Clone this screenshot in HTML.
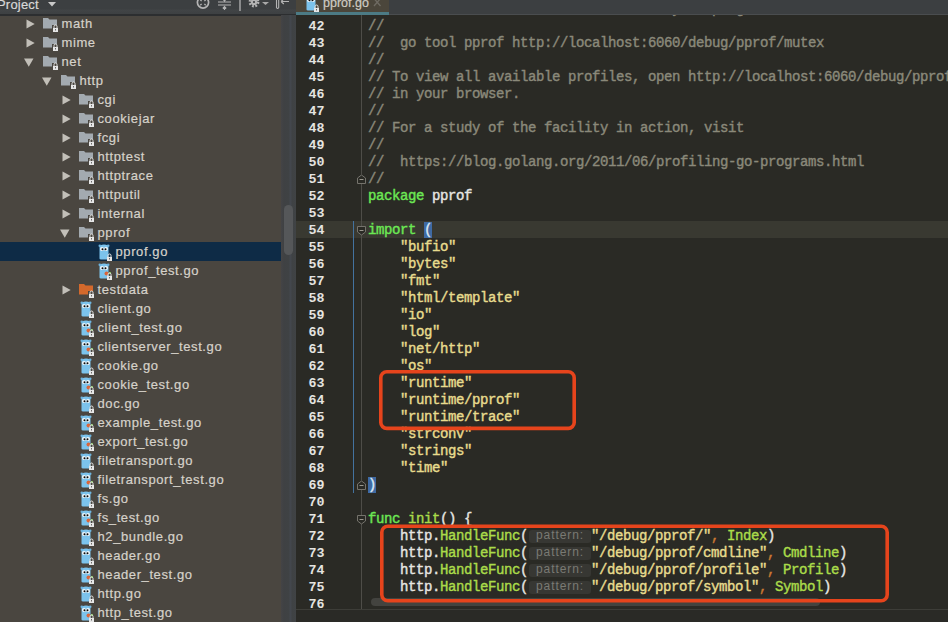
<!DOCTYPE html>
<html><head><meta charset="utf-8">
<style>
*{margin:0;padding:0;box-sizing:border-box}
html,body{width:948px;height:622px;overflow:hidden;background:#2a2a25}
body{position:relative;font-family:"Liberation Sans",sans-serif}
.abs{position:absolute}
#sb{position:absolute;left:0;top:0;width:281px;height:622px;background:#4a4640;overflow:hidden}
#hdr{position:absolute;left:0;top:0;width:296px;height:14px;background:linear-gradient(#3c3f41 0,#3c3f41 9px,#414446 10px,#3e4143 13px)}
#hdrb{position:absolute;left:0;top:14px;width:296px;height:1.5px;background:#2c2e30}
.row{position:absolute;left:0;width:281px;height:19px}
.row.sel{background:#0e2b46}
.t{position:absolute;top:0;height:19px;line-height:19px;font-size:13px;letter-spacing:0.6px;color:#d6d2ca;white-space:pre;-webkit-text-stroke:0.2px}
.ic{position:absolute}
#vtrack{position:absolute;left:281px;top:15px;width:15px;height:607px;background:linear-gradient(90deg,#444446 0,#3f4143 3px,#3f4244 8px,#43474d 9px,#43474d 10px,#3f4244 11px,#404345 15px)}
#vthumb{position:absolute;left:283.5px;top:205px;width:9px;height:50px;border-radius:4.5px;background:#555759}
#ed{position:absolute;left:296px;top:0;width:652px;height:622px;background:#2a2a25;overflow:hidden}
.ln{position:absolute;left:0;width:652px;height:17px}
.cur{background:#393931}
.num{position:absolute;left:0;top:1px;width:28.5px;text-align:right;font-family:"Liberation Mono",monospace;font-size:13.3px;letter-spacing:0;line-height:17px;color:#e4e4e0;font-weight:bold}
.code{position:absolute;left:72px;top:0.5px;white-space:pre;font-family:"Liberation Mono",monospace;font-size:14px;letter-spacing:-0.4px;line-height:17px;color:#e6e6e2;-webkit-text-stroke:0.4px}
.c{color:#8a897a}.k{color:#6ce854}.s{color:#e8dc8e}.f{color:#aadc4a}.o{color:#cc7832}
.hint{display:inline-block;vertical-align:top;margin-top:2px;margin-left:1px;height:13px;width:62px;border-radius:3px;background:#373733;color:#7a7a73;font-family:"Liberation Sans",sans-serif;font-size:12px;line-height:11px;letter-spacing:0.9px;text-indent:7px;position:relative;top:0;-webkit-text-stroke:0}
.brace{background:#3f6aa3;color:#dde8f2}
#tabbar{position:absolute;left:296px;top:0;width:652px;height:15px;background:#3c3f41}
#tab{position:absolute;left:296px;top:0;width:93px;height:12px;background:#4b463b}
#tabline{position:absolute;left:296px;top:12px;width:93px;height:3px;background:#4c7b85}
#tabbot{position:absolute;left:389px;top:14px;width:559px;height:1px;background:#4a4d4f}
.box{position:absolute;border:3.5px solid #e6441c;border-radius:8px}
</style></head><body>
<div id="sb"><div class="row" style="top:14px"><svg class="ic" style="left:25.5px;top:5px" width="9" height="10"><path d="M0.5 0.5 L8.7 5 L0.5 9.5Z" fill="#c2bfb8"/></svg><svg class="ic" style="left:43.0px;top:3px" width="17" height="16"><path d="M0 1 H5 L6.5 2.5 H14 V11.5 H0Z" fill="#a3aab0"/><rect x="9" y="8" width="7" height="8" fill="#4a4640"/><rect x="10" y="11" width="5" height="4" fill="#e6e6e6"/><path d="M11 11 v-1.5 a1.5 1.5 0 0 1 3 0 v1.5" fill="none" stroke="#e6e6e6" stroke-width="1"/><rect x="12" y="12" width="1" height="1.5" fill="#6a6a6a"/></svg><div class="t" style="left:61.5px">math</div></div><div class="row" style="top:33px"><svg class="ic" style="left:25.5px;top:5px" width="9" height="10"><path d="M0.5 0.5 L8.7 5 L0.5 9.5Z" fill="#c2bfb8"/></svg><svg class="ic" style="left:43.0px;top:3px" width="17" height="16"><path d="M0 1 H5 L6.5 2.5 H14 V11.5 H0Z" fill="#a3aab0"/><rect x="9" y="8" width="7" height="8" fill="#4a4640"/><rect x="10" y="11" width="5" height="4" fill="#e6e6e6"/><path d="M11 11 v-1.5 a1.5 1.5 0 0 1 3 0 v1.5" fill="none" stroke="#e6e6e6" stroke-width="1"/><rect x="12" y="12" width="1" height="1.5" fill="#6a6a6a"/></svg><div class="t" style="left:61.5px">mime</div></div><div class="row" style="top:52px"><svg class="ic" style="left:24.0px;top:6px" width="10" height="9"><path d="M0 0.5 L9.5 0.5 L4.75 8.7Z" fill="#c2bfb8"/></svg><svg class="ic" style="left:43.0px;top:3px" width="17" height="16"><path d="M0 1 H5 L6.5 2.5 H14 V11.5 H0Z" fill="#a3aab0"/><rect x="9" y="8" width="7" height="8" fill="#4a4640"/><rect x="10" y="11" width="5" height="4" fill="#e6e6e6"/><path d="M11 11 v-1.5 a1.5 1.5 0 0 1 3 0 v1.5" fill="none" stroke="#e6e6e6" stroke-width="1"/><rect x="12" y="12" width="1" height="1.5" fill="#6a6a6a"/></svg><div class="t" style="left:61.5px">net</div></div><div class="row" style="top:71px"><svg class="ic" style="left:42.0px;top:6px" width="10" height="9"><path d="M0 0.5 L9.5 0.5 L4.75 8.7Z" fill="#c2bfb8"/></svg><svg class="ic" style="left:61.0px;top:3px" width="17" height="16"><path d="M0 1 H5 L6.5 2.5 H14 V11.5 H0Z" fill="#a3aab0"/><rect x="9" y="8" width="7" height="8" fill="#4a4640"/><rect x="10" y="11" width="5" height="4" fill="#e6e6e6"/><path d="M11 11 v-1.5 a1.5 1.5 0 0 1 3 0 v1.5" fill="none" stroke="#e6e6e6" stroke-width="1"/><rect x="12" y="12" width="1" height="1.5" fill="#6a6a6a"/></svg><div class="t" style="left:79.5px">http</div></div><div class="row" style="top:90px"><svg class="ic" style="left:61.5px;top:5px" width="9" height="10"><path d="M0.5 0.5 L8.7 5 L0.5 9.5Z" fill="#c2bfb8"/></svg><svg class="ic" style="left:79.0px;top:3px" width="17" height="16"><path d="M0 1 H5 L6.5 2.5 H14 V11.5 H0Z" fill="#a3aab0"/><rect x="9" y="8" width="7" height="8" fill="#4a4640"/><rect x="10" y="11" width="5" height="4" fill="#e6e6e6"/><path d="M11 11 v-1.5 a1.5 1.5 0 0 1 3 0 v1.5" fill="none" stroke="#e6e6e6" stroke-width="1"/><rect x="12" y="12" width="1" height="1.5" fill="#6a6a6a"/></svg><div class="t" style="left:97.5px">cgi</div></div><div class="row" style="top:109px"><svg class="ic" style="left:61.5px;top:5px" width="9" height="10"><path d="M0.5 0.5 L8.7 5 L0.5 9.5Z" fill="#c2bfb8"/></svg><svg class="ic" style="left:79.0px;top:3px" width="17" height="16"><path d="M0 1 H5 L6.5 2.5 H14 V11.5 H0Z" fill="#a3aab0"/><rect x="9" y="8" width="7" height="8" fill="#4a4640"/><rect x="10" y="11" width="5" height="4" fill="#e6e6e6"/><path d="M11 11 v-1.5 a1.5 1.5 0 0 1 3 0 v1.5" fill="none" stroke="#e6e6e6" stroke-width="1"/><rect x="12" y="12" width="1" height="1.5" fill="#6a6a6a"/></svg><div class="t" style="left:97.5px">cookiejar</div></div><div class="row" style="top:128px"><svg class="ic" style="left:61.5px;top:5px" width="9" height="10"><path d="M0.5 0.5 L8.7 5 L0.5 9.5Z" fill="#c2bfb8"/></svg><svg class="ic" style="left:79.0px;top:3px" width="17" height="16"><path d="M0 1 H5 L6.5 2.5 H14 V11.5 H0Z" fill="#a3aab0"/><rect x="9" y="8" width="7" height="8" fill="#4a4640"/><rect x="10" y="11" width="5" height="4" fill="#e6e6e6"/><path d="M11 11 v-1.5 a1.5 1.5 0 0 1 3 0 v1.5" fill="none" stroke="#e6e6e6" stroke-width="1"/><rect x="12" y="12" width="1" height="1.5" fill="#6a6a6a"/></svg><div class="t" style="left:97.5px">fcgi</div></div><div class="row" style="top:147px"><svg class="ic" style="left:61.5px;top:5px" width="9" height="10"><path d="M0.5 0.5 L8.7 5 L0.5 9.5Z" fill="#c2bfb8"/></svg><svg class="ic" style="left:79.0px;top:3px" width="17" height="16"><path d="M0 1 H5 L6.5 2.5 H14 V11.5 H0Z" fill="#a3aab0"/><rect x="9" y="8" width="7" height="8" fill="#4a4640"/><rect x="10" y="11" width="5" height="4" fill="#e6e6e6"/><path d="M11 11 v-1.5 a1.5 1.5 0 0 1 3 0 v1.5" fill="none" stroke="#e6e6e6" stroke-width="1"/><rect x="12" y="12" width="1" height="1.5" fill="#6a6a6a"/></svg><div class="t" style="left:97.5px">httptest</div></div><div class="row" style="top:166px"><svg class="ic" style="left:61.5px;top:5px" width="9" height="10"><path d="M0.5 0.5 L8.7 5 L0.5 9.5Z" fill="#c2bfb8"/></svg><svg class="ic" style="left:79.0px;top:3px" width="17" height="16"><path d="M0 1 H5 L6.5 2.5 H14 V11.5 H0Z" fill="#a3aab0"/><rect x="9" y="8" width="7" height="8" fill="#4a4640"/><rect x="10" y="11" width="5" height="4" fill="#e6e6e6"/><path d="M11 11 v-1.5 a1.5 1.5 0 0 1 3 0 v1.5" fill="none" stroke="#e6e6e6" stroke-width="1"/><rect x="12" y="12" width="1" height="1.5" fill="#6a6a6a"/></svg><div class="t" style="left:97.5px">httptrace</div></div><div class="row" style="top:185px"><svg class="ic" style="left:61.5px;top:5px" width="9" height="10"><path d="M0.5 0.5 L8.7 5 L0.5 9.5Z" fill="#c2bfb8"/></svg><svg class="ic" style="left:79.0px;top:3px" width="17" height="16"><path d="M0 1 H5 L6.5 2.5 H14 V11.5 H0Z" fill="#a3aab0"/><rect x="9" y="8" width="7" height="8" fill="#4a4640"/><rect x="10" y="11" width="5" height="4" fill="#e6e6e6"/><path d="M11 11 v-1.5 a1.5 1.5 0 0 1 3 0 v1.5" fill="none" stroke="#e6e6e6" stroke-width="1"/><rect x="12" y="12" width="1" height="1.5" fill="#6a6a6a"/></svg><div class="t" style="left:97.5px">httputil</div></div><div class="row" style="top:204px"><svg class="ic" style="left:61.5px;top:5px" width="9" height="10"><path d="M0.5 0.5 L8.7 5 L0.5 9.5Z" fill="#c2bfb8"/></svg><svg class="ic" style="left:79.0px;top:3px" width="17" height="16"><path d="M0 1 H5 L6.5 2.5 H14 V11.5 H0Z" fill="#a3aab0"/><rect x="9" y="8" width="7" height="8" fill="#4a4640"/><rect x="10" y="11" width="5" height="4" fill="#e6e6e6"/><path d="M11 11 v-1.5 a1.5 1.5 0 0 1 3 0 v1.5" fill="none" stroke="#e6e6e6" stroke-width="1"/><rect x="12" y="12" width="1" height="1.5" fill="#6a6a6a"/></svg><div class="t" style="left:97.5px">internal</div></div><div class="row" style="top:223px"><svg class="ic" style="left:60.0px;top:6px" width="10" height="9"><path d="M0 0.5 L9.5 0.5 L4.75 8.7Z" fill="#c2bfb8"/></svg><svg class="ic" style="left:79.0px;top:3px" width="17" height="16"><path d="M0 1 H5 L6.5 2.5 H14 V11.5 H0Z" fill="#a3aab0"/><rect x="9" y="8" width="7" height="8" fill="#4a4640"/><rect x="10" y="11" width="5" height="4" fill="#e6e6e6"/><path d="M11 11 v-1.5 a1.5 1.5 0 0 1 3 0 v1.5" fill="none" stroke="#e6e6e6" stroke-width="1"/><rect x="12" y="12" width="1" height="1.5" fill="#6a6a6a"/></svg><div class="t" style="left:97.5px">pprof</div></div><div class="row sel" style="top:242px"><svg class="ic" style="left:98.0px;top:2px" width="15" height="17"><path d="M1.5 3 Q1.5 0.5 6 0.5 Q10.5 0.5 10.5 3 V14.5 Q10.5 15.5 9 15.5 H3 Q1.5 15.5 1.5 14.5Z" fill="#7cc3ec"/><circle cx="1.8" cy="1.8" r="1.3" fill="#6fb5e0"/><circle cx="10.2" cy="1.8" r="1.3" fill="#6fb5e0"/><circle cx="4" cy="5" r="2" fill="#f4f8fb"/><circle cx="8" cy="5" r="2" fill="#f4f8fb"/><circle cx="4.5" cy="5.2" r="1" fill="#0c0c0c"/><circle cx="7.5" cy="5.2" r="1" fill="#0c0c0c"/><rect x="8" y="9" width="7" height="8" fill="#4a4640" opacity="0"/><rect x="9" y="13" width="5" height="4" fill="#e6e6e6"/><path d="M10 13 v-1.5 a1.5 1.5 0 0 1 3 0 v1.5" fill="none" stroke="#e6e6e6" stroke-width="1"/><rect x="11" y="14" width="1" height="1.5" fill="#6a6a6a"/></svg><div class="t" style="left:115.5px">pprof.go</div></div><div class="row" style="top:261px"><svg class="ic" style="left:98.0px;top:2px" width="15" height="17"><path d="M1.5 3 Q1.5 0.5 6 0.5 Q10.5 0.5 10.5 3 V14.5 Q10.5 15.5 9 15.5 H3 Q1.5 15.5 1.5 14.5Z" fill="#7cc3ec"/><circle cx="1.8" cy="1.8" r="1.3" fill="#6fb5e0"/><circle cx="10.2" cy="1.8" r="1.3" fill="#6fb5e0"/><circle cx="4" cy="5" r="2" fill="#f4f8fb"/><circle cx="8" cy="5" r="2" fill="#f4f8fb"/><circle cx="4.5" cy="5.2" r="1" fill="#0c0c0c"/><circle cx="7.5" cy="5.2" r="1" fill="#0c0c0c"/><circle cx="8.5" cy="10.5" r="2" fill="#d9653a"/><rect x="11" y="9" width="2" height="2" fill="#7dbb5a"/><rect x="8" y="9" width="7" height="8" fill="#4a4640" opacity="0"/><rect x="9" y="13" width="5" height="4" fill="#e6e6e6"/><path d="M10 13 v-1.5 a1.5 1.5 0 0 1 3 0 v1.5" fill="none" stroke="#e6e6e6" stroke-width="1"/><rect x="11" y="14" width="1" height="1.5" fill="#6a6a6a"/></svg><div class="t" style="left:115.5px">pprof_test.go</div></div><div class="row" style="top:280px"><svg class="ic" style="left:61.5px;top:5px" width="9" height="10"><path d="M0.5 0.5 L8.7 5 L0.5 9.5Z" fill="#c2bfb8"/></svg><svg class="ic" style="left:79.0px;top:3px" width="17" height="16"><path d="M0 1 H5 L6.5 2.5 H14 V11.5 H0Z" fill="#d4692c"/><rect x="9" y="8" width="7" height="8" fill="#4a4640"/><rect x="10" y="11" width="5" height="4" fill="#e6e6e6"/><path d="M11 11 v-1.5 a1.5 1.5 0 0 1 3 0 v1.5" fill="none" stroke="#e6e6e6" stroke-width="1"/><rect x="12" y="12" width="1" height="1.5" fill="#6a6a6a"/></svg><div class="t" style="left:97.5px">testdata</div></div><div class="row" style="top:299px"><svg class="ic" style="left:80.0px;top:2px" width="15" height="17"><path d="M1.5 3 Q1.5 0.5 6 0.5 Q10.5 0.5 10.5 3 V14.5 Q10.5 15.5 9 15.5 H3 Q1.5 15.5 1.5 14.5Z" fill="#7cc3ec"/><circle cx="1.8" cy="1.8" r="1.3" fill="#6fb5e0"/><circle cx="10.2" cy="1.8" r="1.3" fill="#6fb5e0"/><circle cx="4" cy="5" r="2" fill="#f4f8fb"/><circle cx="8" cy="5" r="2" fill="#f4f8fb"/><circle cx="4.5" cy="5.2" r="1" fill="#0c0c0c"/><circle cx="7.5" cy="5.2" r="1" fill="#0c0c0c"/><rect x="8" y="9" width="7" height="8" fill="#4a4640" opacity="0"/><rect x="9" y="13" width="5" height="4" fill="#e6e6e6"/><path d="M10 13 v-1.5 a1.5 1.5 0 0 1 3 0 v1.5" fill="none" stroke="#e6e6e6" stroke-width="1"/><rect x="11" y="14" width="1" height="1.5" fill="#6a6a6a"/></svg><div class="t" style="left:97.5px">client.go</div></div><div class="row" style="top:318px"><svg class="ic" style="left:80.0px;top:2px" width="15" height="17"><path d="M1.5 3 Q1.5 0.5 6 0.5 Q10.5 0.5 10.5 3 V14.5 Q10.5 15.5 9 15.5 H3 Q1.5 15.5 1.5 14.5Z" fill="#7cc3ec"/><circle cx="1.8" cy="1.8" r="1.3" fill="#6fb5e0"/><circle cx="10.2" cy="1.8" r="1.3" fill="#6fb5e0"/><circle cx="4" cy="5" r="2" fill="#f4f8fb"/><circle cx="8" cy="5" r="2" fill="#f4f8fb"/><circle cx="4.5" cy="5.2" r="1" fill="#0c0c0c"/><circle cx="7.5" cy="5.2" r="1" fill="#0c0c0c"/><circle cx="8.5" cy="10.5" r="2" fill="#d9653a"/><rect x="11" y="9" width="2" height="2" fill="#7dbb5a"/><rect x="8" y="9" width="7" height="8" fill="#4a4640" opacity="0"/><rect x="9" y="13" width="5" height="4" fill="#e6e6e6"/><path d="M10 13 v-1.5 a1.5 1.5 0 0 1 3 0 v1.5" fill="none" stroke="#e6e6e6" stroke-width="1"/><rect x="11" y="14" width="1" height="1.5" fill="#6a6a6a"/></svg><div class="t" style="left:97.5px">client_test.go</div></div><div class="row" style="top:337px"><svg class="ic" style="left:80.0px;top:2px" width="15" height="17"><path d="M1.5 3 Q1.5 0.5 6 0.5 Q10.5 0.5 10.5 3 V14.5 Q10.5 15.5 9 15.5 H3 Q1.5 15.5 1.5 14.5Z" fill="#7cc3ec"/><circle cx="1.8" cy="1.8" r="1.3" fill="#6fb5e0"/><circle cx="10.2" cy="1.8" r="1.3" fill="#6fb5e0"/><circle cx="4" cy="5" r="2" fill="#f4f8fb"/><circle cx="8" cy="5" r="2" fill="#f4f8fb"/><circle cx="4.5" cy="5.2" r="1" fill="#0c0c0c"/><circle cx="7.5" cy="5.2" r="1" fill="#0c0c0c"/><circle cx="8.5" cy="10.5" r="2" fill="#d9653a"/><rect x="11" y="9" width="2" height="2" fill="#7dbb5a"/><rect x="8" y="9" width="7" height="8" fill="#4a4640" opacity="0"/><rect x="9" y="13" width="5" height="4" fill="#e6e6e6"/><path d="M10 13 v-1.5 a1.5 1.5 0 0 1 3 0 v1.5" fill="none" stroke="#e6e6e6" stroke-width="1"/><rect x="11" y="14" width="1" height="1.5" fill="#6a6a6a"/></svg><div class="t" style="left:97.5px">clientserver_test.go</div></div><div class="row" style="top:356px"><svg class="ic" style="left:80.0px;top:2px" width="15" height="17"><path d="M1.5 3 Q1.5 0.5 6 0.5 Q10.5 0.5 10.5 3 V14.5 Q10.5 15.5 9 15.5 H3 Q1.5 15.5 1.5 14.5Z" fill="#7cc3ec"/><circle cx="1.8" cy="1.8" r="1.3" fill="#6fb5e0"/><circle cx="10.2" cy="1.8" r="1.3" fill="#6fb5e0"/><circle cx="4" cy="5" r="2" fill="#f4f8fb"/><circle cx="8" cy="5" r="2" fill="#f4f8fb"/><circle cx="4.5" cy="5.2" r="1" fill="#0c0c0c"/><circle cx="7.5" cy="5.2" r="1" fill="#0c0c0c"/><rect x="8" y="9" width="7" height="8" fill="#4a4640" opacity="0"/><rect x="9" y="13" width="5" height="4" fill="#e6e6e6"/><path d="M10 13 v-1.5 a1.5 1.5 0 0 1 3 0 v1.5" fill="none" stroke="#e6e6e6" stroke-width="1"/><rect x="11" y="14" width="1" height="1.5" fill="#6a6a6a"/></svg><div class="t" style="left:97.5px">cookie.go</div></div><div class="row" style="top:375px"><svg class="ic" style="left:80.0px;top:2px" width="15" height="17"><path d="M1.5 3 Q1.5 0.5 6 0.5 Q10.5 0.5 10.5 3 V14.5 Q10.5 15.5 9 15.5 H3 Q1.5 15.5 1.5 14.5Z" fill="#7cc3ec"/><circle cx="1.8" cy="1.8" r="1.3" fill="#6fb5e0"/><circle cx="10.2" cy="1.8" r="1.3" fill="#6fb5e0"/><circle cx="4" cy="5" r="2" fill="#f4f8fb"/><circle cx="8" cy="5" r="2" fill="#f4f8fb"/><circle cx="4.5" cy="5.2" r="1" fill="#0c0c0c"/><circle cx="7.5" cy="5.2" r="1" fill="#0c0c0c"/><circle cx="8.5" cy="10.5" r="2" fill="#d9653a"/><rect x="11" y="9" width="2" height="2" fill="#7dbb5a"/><rect x="8" y="9" width="7" height="8" fill="#4a4640" opacity="0"/><rect x="9" y="13" width="5" height="4" fill="#e6e6e6"/><path d="M10 13 v-1.5 a1.5 1.5 0 0 1 3 0 v1.5" fill="none" stroke="#e6e6e6" stroke-width="1"/><rect x="11" y="14" width="1" height="1.5" fill="#6a6a6a"/></svg><div class="t" style="left:97.5px">cookie_test.go</div></div><div class="row" style="top:394px"><svg class="ic" style="left:80.0px;top:2px" width="15" height="17"><path d="M1.5 3 Q1.5 0.5 6 0.5 Q10.5 0.5 10.5 3 V14.5 Q10.5 15.5 9 15.5 H3 Q1.5 15.5 1.5 14.5Z" fill="#7cc3ec"/><circle cx="1.8" cy="1.8" r="1.3" fill="#6fb5e0"/><circle cx="10.2" cy="1.8" r="1.3" fill="#6fb5e0"/><circle cx="4" cy="5" r="2" fill="#f4f8fb"/><circle cx="8" cy="5" r="2" fill="#f4f8fb"/><circle cx="4.5" cy="5.2" r="1" fill="#0c0c0c"/><circle cx="7.5" cy="5.2" r="1" fill="#0c0c0c"/><rect x="8" y="9" width="7" height="8" fill="#4a4640" opacity="0"/><rect x="9" y="13" width="5" height="4" fill="#e6e6e6"/><path d="M10 13 v-1.5 a1.5 1.5 0 0 1 3 0 v1.5" fill="none" stroke="#e6e6e6" stroke-width="1"/><rect x="11" y="14" width="1" height="1.5" fill="#6a6a6a"/></svg><div class="t" style="left:97.5px">doc.go</div></div><div class="row" style="top:413px"><svg class="ic" style="left:80.0px;top:2px" width="15" height="17"><path d="M1.5 3 Q1.5 0.5 6 0.5 Q10.5 0.5 10.5 3 V14.5 Q10.5 15.5 9 15.5 H3 Q1.5 15.5 1.5 14.5Z" fill="#7cc3ec"/><circle cx="1.8" cy="1.8" r="1.3" fill="#6fb5e0"/><circle cx="10.2" cy="1.8" r="1.3" fill="#6fb5e0"/><circle cx="4" cy="5" r="2" fill="#f4f8fb"/><circle cx="8" cy="5" r="2" fill="#f4f8fb"/><circle cx="4.5" cy="5.2" r="1" fill="#0c0c0c"/><circle cx="7.5" cy="5.2" r="1" fill="#0c0c0c"/><circle cx="8.5" cy="10.5" r="2" fill="#d9653a"/><rect x="11" y="9" width="2" height="2" fill="#7dbb5a"/><rect x="8" y="9" width="7" height="8" fill="#4a4640" opacity="0"/><rect x="9" y="13" width="5" height="4" fill="#e6e6e6"/><path d="M10 13 v-1.5 a1.5 1.5 0 0 1 3 0 v1.5" fill="none" stroke="#e6e6e6" stroke-width="1"/><rect x="11" y="14" width="1" height="1.5" fill="#6a6a6a"/></svg><div class="t" style="left:97.5px">example_test.go</div></div><div class="row" style="top:432px"><svg class="ic" style="left:80.0px;top:2px" width="15" height="17"><path d="M1.5 3 Q1.5 0.5 6 0.5 Q10.5 0.5 10.5 3 V14.5 Q10.5 15.5 9 15.5 H3 Q1.5 15.5 1.5 14.5Z" fill="#7cc3ec"/><circle cx="1.8" cy="1.8" r="1.3" fill="#6fb5e0"/><circle cx="10.2" cy="1.8" r="1.3" fill="#6fb5e0"/><circle cx="4" cy="5" r="2" fill="#f4f8fb"/><circle cx="8" cy="5" r="2" fill="#f4f8fb"/><circle cx="4.5" cy="5.2" r="1" fill="#0c0c0c"/><circle cx="7.5" cy="5.2" r="1" fill="#0c0c0c"/><circle cx="8.5" cy="10.5" r="2" fill="#d9653a"/><rect x="11" y="9" width="2" height="2" fill="#7dbb5a"/><rect x="8" y="9" width="7" height="8" fill="#4a4640" opacity="0"/><rect x="9" y="13" width="5" height="4" fill="#e6e6e6"/><path d="M10 13 v-1.5 a1.5 1.5 0 0 1 3 0 v1.5" fill="none" stroke="#e6e6e6" stroke-width="1"/><rect x="11" y="14" width="1" height="1.5" fill="#6a6a6a"/></svg><div class="t" style="left:97.5px">export_test.go</div></div><div class="row" style="top:451px"><svg class="ic" style="left:80.0px;top:2px" width="15" height="17"><path d="M1.5 3 Q1.5 0.5 6 0.5 Q10.5 0.5 10.5 3 V14.5 Q10.5 15.5 9 15.5 H3 Q1.5 15.5 1.5 14.5Z" fill="#7cc3ec"/><circle cx="1.8" cy="1.8" r="1.3" fill="#6fb5e0"/><circle cx="10.2" cy="1.8" r="1.3" fill="#6fb5e0"/><circle cx="4" cy="5" r="2" fill="#f4f8fb"/><circle cx="8" cy="5" r="2" fill="#f4f8fb"/><circle cx="4.5" cy="5.2" r="1" fill="#0c0c0c"/><circle cx="7.5" cy="5.2" r="1" fill="#0c0c0c"/><rect x="8" y="9" width="7" height="8" fill="#4a4640" opacity="0"/><rect x="9" y="13" width="5" height="4" fill="#e6e6e6"/><path d="M10 13 v-1.5 a1.5 1.5 0 0 1 3 0 v1.5" fill="none" stroke="#e6e6e6" stroke-width="1"/><rect x="11" y="14" width="1" height="1.5" fill="#6a6a6a"/></svg><div class="t" style="left:97.5px">filetransport.go</div></div><div class="row" style="top:470px"><svg class="ic" style="left:80.0px;top:2px" width="15" height="17"><path d="M1.5 3 Q1.5 0.5 6 0.5 Q10.5 0.5 10.5 3 V14.5 Q10.5 15.5 9 15.5 H3 Q1.5 15.5 1.5 14.5Z" fill="#7cc3ec"/><circle cx="1.8" cy="1.8" r="1.3" fill="#6fb5e0"/><circle cx="10.2" cy="1.8" r="1.3" fill="#6fb5e0"/><circle cx="4" cy="5" r="2" fill="#f4f8fb"/><circle cx="8" cy="5" r="2" fill="#f4f8fb"/><circle cx="4.5" cy="5.2" r="1" fill="#0c0c0c"/><circle cx="7.5" cy="5.2" r="1" fill="#0c0c0c"/><circle cx="8.5" cy="10.5" r="2" fill="#d9653a"/><rect x="11" y="9" width="2" height="2" fill="#7dbb5a"/><rect x="8" y="9" width="7" height="8" fill="#4a4640" opacity="0"/><rect x="9" y="13" width="5" height="4" fill="#e6e6e6"/><path d="M10 13 v-1.5 a1.5 1.5 0 0 1 3 0 v1.5" fill="none" stroke="#e6e6e6" stroke-width="1"/><rect x="11" y="14" width="1" height="1.5" fill="#6a6a6a"/></svg><div class="t" style="left:97.5px">filetransport_test.go</div></div><div class="row" style="top:489px"><svg class="ic" style="left:80.0px;top:2px" width="15" height="17"><path d="M1.5 3 Q1.5 0.5 6 0.5 Q10.5 0.5 10.5 3 V14.5 Q10.5 15.5 9 15.5 H3 Q1.5 15.5 1.5 14.5Z" fill="#7cc3ec"/><circle cx="1.8" cy="1.8" r="1.3" fill="#6fb5e0"/><circle cx="10.2" cy="1.8" r="1.3" fill="#6fb5e0"/><circle cx="4" cy="5" r="2" fill="#f4f8fb"/><circle cx="8" cy="5" r="2" fill="#f4f8fb"/><circle cx="4.5" cy="5.2" r="1" fill="#0c0c0c"/><circle cx="7.5" cy="5.2" r="1" fill="#0c0c0c"/><rect x="8" y="9" width="7" height="8" fill="#4a4640" opacity="0"/><rect x="9" y="13" width="5" height="4" fill="#e6e6e6"/><path d="M10 13 v-1.5 a1.5 1.5 0 0 1 3 0 v1.5" fill="none" stroke="#e6e6e6" stroke-width="1"/><rect x="11" y="14" width="1" height="1.5" fill="#6a6a6a"/></svg><div class="t" style="left:97.5px">fs.go</div></div><div class="row" style="top:508px"><svg class="ic" style="left:80.0px;top:2px" width="15" height="17"><path d="M1.5 3 Q1.5 0.5 6 0.5 Q10.5 0.5 10.5 3 V14.5 Q10.5 15.5 9 15.5 H3 Q1.5 15.5 1.5 14.5Z" fill="#7cc3ec"/><circle cx="1.8" cy="1.8" r="1.3" fill="#6fb5e0"/><circle cx="10.2" cy="1.8" r="1.3" fill="#6fb5e0"/><circle cx="4" cy="5" r="2" fill="#f4f8fb"/><circle cx="8" cy="5" r="2" fill="#f4f8fb"/><circle cx="4.5" cy="5.2" r="1" fill="#0c0c0c"/><circle cx="7.5" cy="5.2" r="1" fill="#0c0c0c"/><circle cx="8.5" cy="10.5" r="2" fill="#d9653a"/><rect x="11" y="9" width="2" height="2" fill="#7dbb5a"/><rect x="8" y="9" width="7" height="8" fill="#4a4640" opacity="0"/><rect x="9" y="13" width="5" height="4" fill="#e6e6e6"/><path d="M10 13 v-1.5 a1.5 1.5 0 0 1 3 0 v1.5" fill="none" stroke="#e6e6e6" stroke-width="1"/><rect x="11" y="14" width="1" height="1.5" fill="#6a6a6a"/></svg><div class="t" style="left:97.5px">fs_test.go</div></div><div class="row" style="top:527px"><svg class="ic" style="left:80.0px;top:2px" width="15" height="17"><path d="M1.5 3 Q1.5 0.5 6 0.5 Q10.5 0.5 10.5 3 V14.5 Q10.5 15.5 9 15.5 H3 Q1.5 15.5 1.5 14.5Z" fill="#7cc3ec"/><circle cx="1.8" cy="1.8" r="1.3" fill="#6fb5e0"/><circle cx="10.2" cy="1.8" r="1.3" fill="#6fb5e0"/><circle cx="4" cy="5" r="2" fill="#f4f8fb"/><circle cx="8" cy="5" r="2" fill="#f4f8fb"/><circle cx="4.5" cy="5.2" r="1" fill="#0c0c0c"/><circle cx="7.5" cy="5.2" r="1" fill="#0c0c0c"/><rect x="8" y="9" width="7" height="8" fill="#4a4640" opacity="0"/><rect x="9" y="13" width="5" height="4" fill="#e6e6e6"/><path d="M10 13 v-1.5 a1.5 1.5 0 0 1 3 0 v1.5" fill="none" stroke="#e6e6e6" stroke-width="1"/><rect x="11" y="14" width="1" height="1.5" fill="#6a6a6a"/></svg><div class="t" style="left:97.5px">h2_bundle.go</div></div><div class="row" style="top:546px"><svg class="ic" style="left:80.0px;top:2px" width="15" height="17"><path d="M1.5 3 Q1.5 0.5 6 0.5 Q10.5 0.5 10.5 3 V14.5 Q10.5 15.5 9 15.5 H3 Q1.5 15.5 1.5 14.5Z" fill="#7cc3ec"/><circle cx="1.8" cy="1.8" r="1.3" fill="#6fb5e0"/><circle cx="10.2" cy="1.8" r="1.3" fill="#6fb5e0"/><circle cx="4" cy="5" r="2" fill="#f4f8fb"/><circle cx="8" cy="5" r="2" fill="#f4f8fb"/><circle cx="4.5" cy="5.2" r="1" fill="#0c0c0c"/><circle cx="7.5" cy="5.2" r="1" fill="#0c0c0c"/><rect x="8" y="9" width="7" height="8" fill="#4a4640" opacity="0"/><rect x="9" y="13" width="5" height="4" fill="#e6e6e6"/><path d="M10 13 v-1.5 a1.5 1.5 0 0 1 3 0 v1.5" fill="none" stroke="#e6e6e6" stroke-width="1"/><rect x="11" y="14" width="1" height="1.5" fill="#6a6a6a"/></svg><div class="t" style="left:97.5px">header.go</div></div><div class="row" style="top:565px"><svg class="ic" style="left:80.0px;top:2px" width="15" height="17"><path d="M1.5 3 Q1.5 0.5 6 0.5 Q10.5 0.5 10.5 3 V14.5 Q10.5 15.5 9 15.5 H3 Q1.5 15.5 1.5 14.5Z" fill="#7cc3ec"/><circle cx="1.8" cy="1.8" r="1.3" fill="#6fb5e0"/><circle cx="10.2" cy="1.8" r="1.3" fill="#6fb5e0"/><circle cx="4" cy="5" r="2" fill="#f4f8fb"/><circle cx="8" cy="5" r="2" fill="#f4f8fb"/><circle cx="4.5" cy="5.2" r="1" fill="#0c0c0c"/><circle cx="7.5" cy="5.2" r="1" fill="#0c0c0c"/><circle cx="8.5" cy="10.5" r="2" fill="#d9653a"/><rect x="11" y="9" width="2" height="2" fill="#7dbb5a"/><rect x="8" y="9" width="7" height="8" fill="#4a4640" opacity="0"/><rect x="9" y="13" width="5" height="4" fill="#e6e6e6"/><path d="M10 13 v-1.5 a1.5 1.5 0 0 1 3 0 v1.5" fill="none" stroke="#e6e6e6" stroke-width="1"/><rect x="11" y="14" width="1" height="1.5" fill="#6a6a6a"/></svg><div class="t" style="left:97.5px">header_test.go</div></div><div class="row" style="top:584px"><svg class="ic" style="left:80.0px;top:2px" width="15" height="17"><path d="M1.5 3 Q1.5 0.5 6 0.5 Q10.5 0.5 10.5 3 V14.5 Q10.5 15.5 9 15.5 H3 Q1.5 15.5 1.5 14.5Z" fill="#7cc3ec"/><circle cx="1.8" cy="1.8" r="1.3" fill="#6fb5e0"/><circle cx="10.2" cy="1.8" r="1.3" fill="#6fb5e0"/><circle cx="4" cy="5" r="2" fill="#f4f8fb"/><circle cx="8" cy="5" r="2" fill="#f4f8fb"/><circle cx="4.5" cy="5.2" r="1" fill="#0c0c0c"/><circle cx="7.5" cy="5.2" r="1" fill="#0c0c0c"/><rect x="8" y="9" width="7" height="8" fill="#4a4640" opacity="0"/><rect x="9" y="13" width="5" height="4" fill="#e6e6e6"/><path d="M10 13 v-1.5 a1.5 1.5 0 0 1 3 0 v1.5" fill="none" stroke="#e6e6e6" stroke-width="1"/><rect x="11" y="14" width="1" height="1.5" fill="#6a6a6a"/></svg><div class="t" style="left:97.5px">http.go</div></div><div class="row" style="top:603px"><svg class="ic" style="left:80.0px;top:2px" width="15" height="17"><path d="M1.5 3 Q1.5 0.5 6 0.5 Q10.5 0.5 10.5 3 V14.5 Q10.5 15.5 9 15.5 H3 Q1.5 15.5 1.5 14.5Z" fill="#7cc3ec"/><circle cx="1.8" cy="1.8" r="1.3" fill="#6fb5e0"/><circle cx="10.2" cy="1.8" r="1.3" fill="#6fb5e0"/><circle cx="4" cy="5" r="2" fill="#f4f8fb"/><circle cx="8" cy="5" r="2" fill="#f4f8fb"/><circle cx="4.5" cy="5.2" r="1" fill="#0c0c0c"/><circle cx="7.5" cy="5.2" r="1" fill="#0c0c0c"/><circle cx="8.5" cy="10.5" r="2" fill="#d9653a"/><rect x="11" y="9" width="2" height="2" fill="#7dbb5a"/><rect x="8" y="9" width="7" height="8" fill="#4a4640" opacity="0"/><rect x="9" y="13" width="5" height="4" fill="#e6e6e6"/><path d="M10 13 v-1.5 a1.5 1.5 0 0 1 3 0 v1.5" fill="none" stroke="#e6e6e6" stroke-width="1"/><rect x="11" y="14" width="1" height="1.5" fill="#6a6a6a"/></svg><div class="t" style="left:97.5px">http_test.go</div></div></div><div id="hdr"><div class="t" style="left:-3px;top:-5px;font-size:13px;letter-spacing:0.2px;color:#d8d8d8">Project</div><svg class="ic" style="left:48px;top:2px" width="8" height="5"><path d="M0 0H8L4 4.5Z" fill="#c8c8c8"/></svg><svg class="ic" style="left:196px;top:-4px" width="14" height="14"><circle cx="7" cy="6.5" r="5.6" fill="none" stroke="#b4b4b4" stroke-width="1.7"/><path d="M4.3 3.8L5.6 5.1M9.7 3.8L8.4 5.1M4.3 9.2L5.6 7.9M9.7 9.2L8.4 7.9" stroke="#b4b4b4" stroke-width="1.3"/></svg><svg class="ic" style="left:218px;top:-3px" width="13" height="14"><path d="M0 5H13M0 8H13M6.5 0V3.5M4.8 2L6.5 3.8L8.2 2M6.5 9.5V13M4.8 11.5L6.5 9.7L8.2 11.5" fill="none" stroke="#b4b4b4" stroke-width="1.2"/></svg><div class="abs" style="left:239px;top:0;width:2px;height:11px;background:#8a8b8c"></div><svg class="ic" style="left:247px;top:-4px" width="24" height="12"><circle cx="7" cy="6" r="4.2" fill="none" stroke="#b4b4b4" stroke-width="2.4" stroke-dasharray="1.8 1.5"/><circle cx="7" cy="6" r="3.2" fill="#b4b4b4"/><circle cx="7" cy="6" r="1.1" fill="#3c3f41"/><path d="M15 6H22L18.5 9Z" fill="#a8a8a8"/></svg><svg class="ic" style="left:275px;top:-3px" width="16" height="14"><path d="M1.5 0V10.5Q2.6 12.5 3.7 10.5V0" fill="none" stroke="#b4b4b4" stroke-width="1.1"/><path d="M6 4.5H14M6 4.5L8.8 2M6 4.5L8.8 7" fill="none" stroke="#b4b4b4" stroke-width="1.1"/></svg></div><div id="hdrb"></div><div id="vtrack"></div><div id="vthumb"></div><div id="ed"><div class="ln" style="top:0px"><div class="num">41</div><div class="code"><span class="c">// runtime.SetMutexProfileFraction in your program:</span></div></div><div class="ln" style="top:17px"><div class="num">42</div><div class="code"><span class="c">//</span></div></div><div class="ln" style="top:34px"><div class="num">43</div><div class="code"><span class="c">//  go tool pprof http://localhost:6060/debug/pprof/mutex</span></div></div><div class="ln" style="top:51px"><div class="num">44</div><div class="code"><span class="c">//</span></div></div><div class="ln" style="top:68px"><div class="num">45</div><div class="code"><span class="c">// To view all available profiles, open http://localhost:6060/debug/pprof/</span></div></div><div class="ln" style="top:85px"><div class="num">46</div><div class="code"><span class="c">// in your browser.</span></div></div><div class="ln" style="top:102px"><div class="num">47</div><div class="code"><span class="c">//</span></div></div><div class="ln" style="top:119px"><div class="num">48</div><div class="code"><span class="c">// For a study of the facility in action, visit</span></div></div><div class="ln" style="top:136px"><div class="num">49</div><div class="code"><span class="c">//</span></div></div><div class="ln" style="top:153px"><div class="num">50</div><div class="code"><span class="c">//  https://blog.golang.org/2011/06/profiling-go-programs.html</span></div></div><div class="ln" style="top:170px"><div class="num">51</div><div class="code"><span class="c">//</span></div></div><div class="ln" style="top:187px"><div class="num">52</div><div class="code"><span class="k">package</span> pprof</div></div><div class="ln" style="top:204px"><div class="num">53</div><div class="code"></div></div><div class="ln cur" style="top:221px"><div class="num">54</div><div class="code"><span class="k">import</span> <span class="brace">(</span></div></div><div class="ln" style="top:238px"><div class="num">55</div><div class="code">    <span class="s">&quot;bufio&quot;</span></div></div><div class="ln" style="top:255px"><div class="num">56</div><div class="code">    <span class="s">&quot;bytes&quot;</span></div></div><div class="ln" style="top:272px"><div class="num">57</div><div class="code">    <span class="s">&quot;fmt&quot;</span></div></div><div class="ln" style="top:289px"><div class="num">58</div><div class="code">    <span class="s">&quot;html/template&quot;</span></div></div><div class="ln" style="top:306px"><div class="num">59</div><div class="code">    <span class="s">&quot;io&quot;</span></div></div><div class="ln" style="top:323px"><div class="num">60</div><div class="code">    <span class="s">&quot;log&quot;</span></div></div><div class="ln" style="top:340px"><div class="num">61</div><div class="code">    <span class="s">&quot;net/http&quot;</span></div></div><div class="ln" style="top:357px"><div class="num">62</div><div class="code">    <span class="s">&quot;os&quot;</span></div></div><div class="ln" style="top:374px"><div class="num">63</div><div class="code">    <span class="s">&quot;runtime&quot;</span></div></div><div class="ln" style="top:391px"><div class="num">64</div><div class="code">    <span class="s">&quot;runtime/pprof&quot;</span></div></div><div class="ln" style="top:408px"><div class="num">65</div><div class="code">    <span class="s">&quot;runtime/trace&quot;</span></div></div><div class="ln" style="top:425px"><div class="num">66</div><div class="code">    <span class="s">&quot;strconv&quot;</span></div></div><div class="ln" style="top:442px"><div class="num">67</div><div class="code">    <span class="s">&quot;strings&quot;</span></div></div><div class="ln" style="top:459px"><div class="num">68</div><div class="code">    <span class="s">&quot;time&quot;</span></div></div><div class="ln" style="top:476px"><div class="num">69</div><div class="code"><span class="brace">)</span></div></div><div class="ln" style="top:493px"><div class="num">70</div><div class="code"></div></div><div class="ln" style="top:510px"><div class="num">71</div><div class="code"><span class="k">func</span> <span class="f">init</span>() {</div></div><div class="ln" style="top:527px"><div class="num">72</div><div class="code">    http.<span class="f">HandleFunc</span>(<span class="hint">pattern:</span><span class="s">&quot;/debug/pprof/&quot;</span><span class="o">, </span><span class="f">Index</span>)</div></div><div class="ln" style="top:544px"><div class="num">73</div><div class="code">    http.<span class="f">HandleFunc</span>(<span class="hint">pattern:</span><span class="s">&quot;/debug/pprof/cmdline&quot;</span><span class="o">, </span><span class="f">Cmdline</span>)</div></div><div class="ln" style="top:561px"><div class="num">74</div><div class="code">    http.<span class="f">HandleFunc</span>(<span class="hint">pattern:</span><span class="s">&quot;/debug/pprof/profile&quot;</span><span class="o">, </span><span class="f">Profile</span>)</div></div><div class="ln" style="top:578px"><div class="num">75</div><div class="code">    http.<span class="f">HandleFunc</span>(<span class="hint">pattern:</span><span class="s">&quot;/debug/pprof/symbol&quot;</span><span class="o">, </span><span class="f">Symbol</span>)</div></div><div class="ln" style="top:595px"><div class="num">76</div><div class="code"></div></div><div class="abs" style="left:65px;top:15px;width:1px;height:594px;background:#4e4d48"></div><svg class="ic" style="left:61px;top:174.5px" width="9" height="10"><path d="M0.5 8.5H8.5V3L4.5 0L0.5 3Z" fill="#2a2a25" stroke="#75736c" stroke-width="1"/><path d="M2.5 4.5H6.5" stroke="#9a988f" stroke-width="1"/></svg><svg class="ic" style="left:61px;top:225.5px" width="9" height="10"><path d="M0.5 0.5H8.5V6L4.5 9L0.5 6Z" fill="#2a2a25" stroke="#75736c" stroke-width="1"/><path d="M2.5 4.5H6.5" stroke="#9a988f" stroke-width="1"/></svg><svg class="ic" style="left:61px;top:480.5px" width="9" height="10"><path d="M0.5 8.5H8.5V3L4.5 0L0.5 3Z" fill="#2a2a25" stroke="#75736c" stroke-width="1"/><path d="M2.5 4.5H6.5" stroke="#9a988f" stroke-width="1"/></svg><svg class="ic" style="left:61px;top:514.5px" width="9" height="10"><path d="M0.5 0.5H8.5V6L4.5 9L0.5 6Z" fill="#2a2a25" stroke="#75736c" stroke-width="1"/><path d="M2.5 4.5H6.5" stroke="#9a988f" stroke-width="1"/></svg><div class="abs" style="left:57px;top:221px;width:1px;height:272px;background:#43729f"></div><div class="abs" style="left:74.5px;top:597.5px;width:449px;height:8.5px;border-radius:4px;background:#43433f"></div><div class="abs" style="left:0;top:609px;width:652px;height:1px;background:#3d3d38"></div><div class="abs" style="left:0;top:610px;width:652px;height:12px;background:#2a2a26"></div></div><div id="tabbar"></div><div id="tabbot"></div><div id="tab"></div><div id="tabline"></div><svg class="ic"  style="left:305.0px;top:-5px" width="15" height="17"><path d="M1.5 3 Q1.5 0.5 6 0.5 Q10.5 0.5 10.5 3 V14.5 Q10.5 15.5 9 15.5 H3 Q1.5 15.5 1.5 14.5Z" fill="#7cc3ec"/><circle cx="1.8" cy="1.8" r="1.3" fill="#6fb5e0"/><circle cx="10.2" cy="1.8" r="1.3" fill="#6fb5e0"/><circle cx="4" cy="5" r="2" fill="#f4f8fb"/><circle cx="8" cy="5" r="2" fill="#f4f8fb"/><circle cx="4.5" cy="5.2" r="1" fill="#0c0c0c"/><circle cx="7.5" cy="5.2" r="1" fill="#0c0c0c"/><rect x="8" y="9" width="7" height="8" fill="#4a4640" opacity="0"/><rect x="9" y="13" width="5" height="4" fill="#e6e6e6"/><path d="M10 13 v-1.5 a1.5 1.5 0 0 1 3 0 v1.5" fill="none" stroke="#e6e6e6" stroke-width="1"/><rect x="11" y="14" width="1" height="1.5" fill="#6a6a6a"/></svg><div class="t" style="left:323px;top:-6.5px;font-size:12.5px;letter-spacing:0;color:#d0ccc4">pprof.go</div><svg class="ic" style="left:373px;top:0" width="9" height="7"><path d="M1 -1.5L7.5 6M7.5 -1.5L1 6" stroke="#6f6b63" stroke-width="1.3"/></svg><svg class="abs" style="left:0;top:0" width="948" height="622"><rect x="380.8" y="371.8" width="193.4" height="56.6" rx="6" fill="none" stroke="#e6441c" stroke-width="3.6"/><rect x="381.8" y="526.3" width="505.4" height="74.4" rx="6" fill="none" stroke="#e6441c" stroke-width="3.6"/></svg></body></html>
